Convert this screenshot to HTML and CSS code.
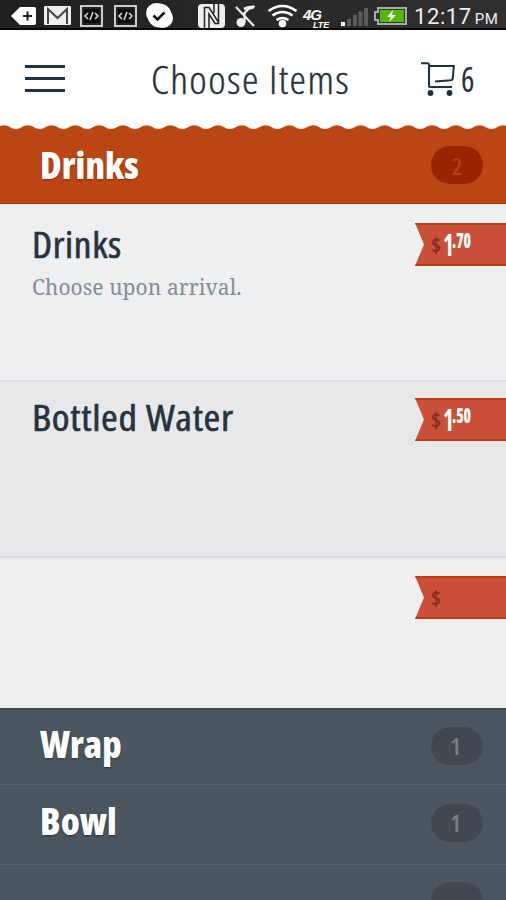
FILE: index.html
```html
<!DOCTYPE html>
<html lang="en">
<head>
<meta charset="utf-8">
<title>Choose Items</title>
<link rel="stylesheet" href="styles.css">
</head>
<body>
<div class="statusbar">
  <svg class="status-icons" width="410" height="30" viewBox="0 0 410 30" aria-hidden="true">
    <path d="M11 16l9-9h14q2 0 2 2v14q0 2-2 2H20z" fill="#fff"/>
    <path d="M23 16h9M27.500 11.500v9" stroke="#222" stroke-width="2"/>
    <rect x="44" y="6" width="27" height="19" rx="1" fill="#eee"/>
    <path d="M48 24V9l9.500 9L67 9v15" fill="none" stroke="#444" stroke-width="2"/>
    <g fill="#222" stroke="#ccc" stroke-width="2">
      <rect x="81" y="6" width="21" height="20"/><rect x="115" y="6" width="21" height="20"/>
    </g>
    <g fill="#0d0d0d"><rect x="84" y="9" width="15" height="14"/><rect x="118" y="9" width="15" height="14"/></g>
    <g fill="none" stroke="#ddd" stroke-width="1.500">
      <path id="code" d="M88 13l-3 3 3 3M95 13l3 3-3 3M93 12l-3 8"/>
      <use href="#code" x="34"/>
    </g>
    <circle cx="156" cy="13" r="10" fill="#fff"/><circle cx="163" cy="18" r="10" fill="#fff"/><circle cx="159.500" cy="15.500" r="12" fill="#fff"/>
    <path d="M153.500 15.500l4 4 7-7" fill="none" stroke="#111" stroke-width="2.500"/>
    <rect x="198" y="4" width="27" height="24" rx="4" fill="#eee"/>
    <path d="M204.500 28V7.500h4.500l9 14M209 28V14l6 9.500h3.500V4M214 4v9" fill="none" stroke="#222" stroke-width="1.500"/>
    <circle cx="241" cy="22.500" r="4.500" fill="#eee"/>
    <path d="M244.500 22v-9l4-4q3 0 6-3M236 7l18 19" fill="none" stroke="#eee" stroke-width="2.200"/>
    <path d="M244 9q4-2 10-2" fill="none" stroke="#eee" stroke-width="3"/>
    <g fill="none" stroke="#fff" stroke-width="2.600">
      <path d="M268.500 11q14-10 28 0M272.500 15.500q10-7 20 0M276.500 20q6-4 12 0"/>
    </g>
    <circle cx="282.500" cy="23.500" r="3.800" fill="#fff"/>
    <text x="303" y="19.500" class="net-g">4G</text><text x="313" y="28" class="net-lte">LTE</text>
    <rect x="341" y="22" width="4" height="4" fill="#fff"/>
    <path d="M347 19h4v7h-4zM353 15h4v11h-4zM358.500 11.500h4V26h-4zM364 8h4v18h-4z" fill="#5a5a5a"/>
    <path d="M378 8h28v16h-28v-4h-3v-8h3z" fill="#333" stroke="#aaa" stroke-width="2"/>
    <rect x="380" y="10" width="24" height="12" fill="#55b800"/>
    <path d="M393 10l-6 7h4l-2 5 7-7h-4z" fill="#fff"/>
  </svg>
  <div class="clock">12:17<span class="meridiem">PM</span></div>
</div>

<header class="header">
  <div class="menu"><i></i><i></i><i></i></div>
  <h1 class="title">Choose Items</h1>
  <div class="cart">
    <svg width="36" height="36" viewBox="0 0 36 36" aria-hidden="true">
      <path d="M1 3.200h6.500q1.500 0 1.500 1.500V26q0 1 1 1h22M9 6h24.800l-1 12.500q-.2 1.400-2 1.700L15 21.500" fill="none" stroke="#1d303d" stroke-width="2"/>
      <circle cx="10.500" cy="33" r="2.900" fill="#1d303d"/><circle cx="29.500" cy="33" r="2.900" fill="#1d303d"/>
    </svg>
    <span class="cart-count">6</span>
  </div>
</header>

<svg class="scallops" width="506" height="5" aria-hidden="true">
  <defs><pattern id="wave" x="-7.900" y="0" width="23.780" height="5" patternUnits="userSpaceOnUse">
    <path d="M0 5V4Q3.500 4 6 2Q8.500.3 11.900.3T17.800 2Q20.300 4 23.780 4V5z" fill="#b94613"/>
  </pattern></defs>
  <rect width="506" height="5" fill="url(#wave)"/>
</svg>
<section class="category open"><h2>Drinks</h2><span class="badge">2</span></section>

<main class="items">
  <article class="item first">
    <div class="info"><h3>Drinks</h3><p>Choose upon arrival.</p></div>
    <div class="price"><span class="dollar">$</span><span class="whole">1</span><span class="cents">.70</span></div>
  </article>
  <article class="item second">
    <div class="info"><h3>Bottled Water</h3></div>
    <div class="price"><span class="dollar">$</span><span class="whole">1</span><span class="cents">.50</span></div>
  </article>
  <article class="item third">
    <div class="info"></div>
    <div class="price"><span class="dollar">$</span></div>
  </article>
</main>

<section class="category wrap"><h2>Wrap</h2><span class="badge">1</span></section>
<section class="category bowl"><h2>Bowl</h2><span class="badge">1</span></section>
<section class="category last"><h2></h2><span class="badge"></span></section>
</body>
</html>
```
FILE: styles.css
```css
* { box-sizing: border-box; }
body { margin: 0; width: 506px; height: 900px; overflow: hidden; background: #fff; font-family: "Open Sans", sans-serif; font-stretch: 75%; color: #25333d; }
h1, h2, h3, p { margin: 0; white-space: nowrap; }
.statusbar { height: 30px; display: flex; background: linear-gradient(90deg, #202020, #303030); border-bottom: 2px solid #080808; }
.status-icons { flex: none; }
.net-g { font: italic 700 15px/1 "Liberation Sans", sans-serif; fill: #fff; letter-spacing: -1px; }
.net-lte { font: italic 700 9px/1 "Liberation Sans", sans-serif; fill: #fff; }
.clock { padding-left: 4px; font: 22px/34px Roboto, sans-serif; letter-spacing: .6px; color: #eee; white-space: nowrap; }
.meridiem { font-size: 15px; margin-left: 3px; }
.header { height: 95px; display: flex; align-items: flex-start; }
.menu { width: 40px; margin: 35px 0 0 25px; display: flex; flex-direction: column; gap: 9px; }
.menu i { height: 3px; background: #1d303d; }
.title { width: 200px; margin: 23px 0 0 86px; font-size: 38px; line-height: 52px; font-weight: 300; letter-spacing: 1.300px; -webkit-text-stroke: .4px; transform: scaleX(1.095); transform-origin: left; }
.cart { margin: 30px 0 0 69px; display: flex; }
.cart-count { margin: -2px 0 0 5px; font-size: 34px; line-height: 42px; font-weight: 400; transform: scaleX(.93); transform-origin: left; }
.scallops { display: block; }
.category { display: flex; justify-content: space-between; align-items: flex-start; padding: 0 23px 0 40px; background: #4c565e; color: #fff; }
.category h2 { font-size: 37px; line-height: 50px; font-weight: 800; text-shadow: 0 1px 2px #27323a; }
.category.open { height: 74px; background: #b94613; border-bottom: 1px solid #ad3908; }
.open h2 { margin-top: 10px; text-shadow: 0 1px 2px #a32000; }
.badge { width: 52px; height: 38px; border-radius: 19px; background: #41494f; color: #75808a; text-align: center; font-size: 24px; line-height: 38px; font-weight: 600; padding-right: 3px; }
.open .badge { margin-top: 16px; background: #982500; color: #b23d14; padding-right: 0; line-height: 40px; }
.wrap { height: 77px; border-top: 2px solid #3c4a50; border-bottom: 1px solid #57616a; }
.wrap h2 { margin-top: 9px; }
.wrap .badge { margin-top: 17px; }
.bowl { height: 80px; border-bottom: 1px solid #57616a; }
.bowl h2 { margin-top: 11px; }
.bowl .badge { margin-top: 19px; }
.last { height: 35px; overflow: hidden; }
.last .badge { margin-top: 17px; }
.item { display: flex; justify-content: space-between; background: #eeeff1; }
.first { height: 176px; border-top: 1px solid #fbe9e3; }
.second { height: 176px; background: #e8e8ea; border-top: 2px solid #dcdde0; }
.third { height: 152px; border-top: 2px solid #dcdde0; }
.info { padding: 14px 0 0 32px; }
.info h3 { font-size: 37px; line-height: 50px; font-weight: 400; letter-spacing: .600px; -webkit-text-stroke: .6px; transform: scaleX(1.095); transform-origin: left; }
.first h3 { transform: scaleX(1.06); }
.second h3 { margin-top: -4px; }
.info p { margin-top: 5px; font: 21px/26px "Noto Serif", "DejaVu Serif", serif; font-stretch: normal; letter-spacing: .08px; color: #858c96; }
.price { width: 91px; height: 43px; margin-top: 18px; padding-left: 16px; display: flex; align-items: flex-start; background: #cb5039; border: solid #bd3b0d; border-width: 2px 0; clip-path: polygon(0 0, 100% 0, 100% 100%, 0 100%, 9px 50%); color: #fff; }
.second .price { margin-top: 16px; }
.third .price { margin-top: 18px; }
.dollar { width: 12px; font-size: 21px; line-height: 40px; font-weight: 700; color: #872e1f; }
.whole { width: 9px; font-size: 31px; line-height: 39px; font-weight: 700; transform: scaleX(.74); transform-origin: left; }
.cents { font-size: 21px; line-height: 31px; font-weight: 800; transform: scaleX(.72); transform-origin: left; }
```
